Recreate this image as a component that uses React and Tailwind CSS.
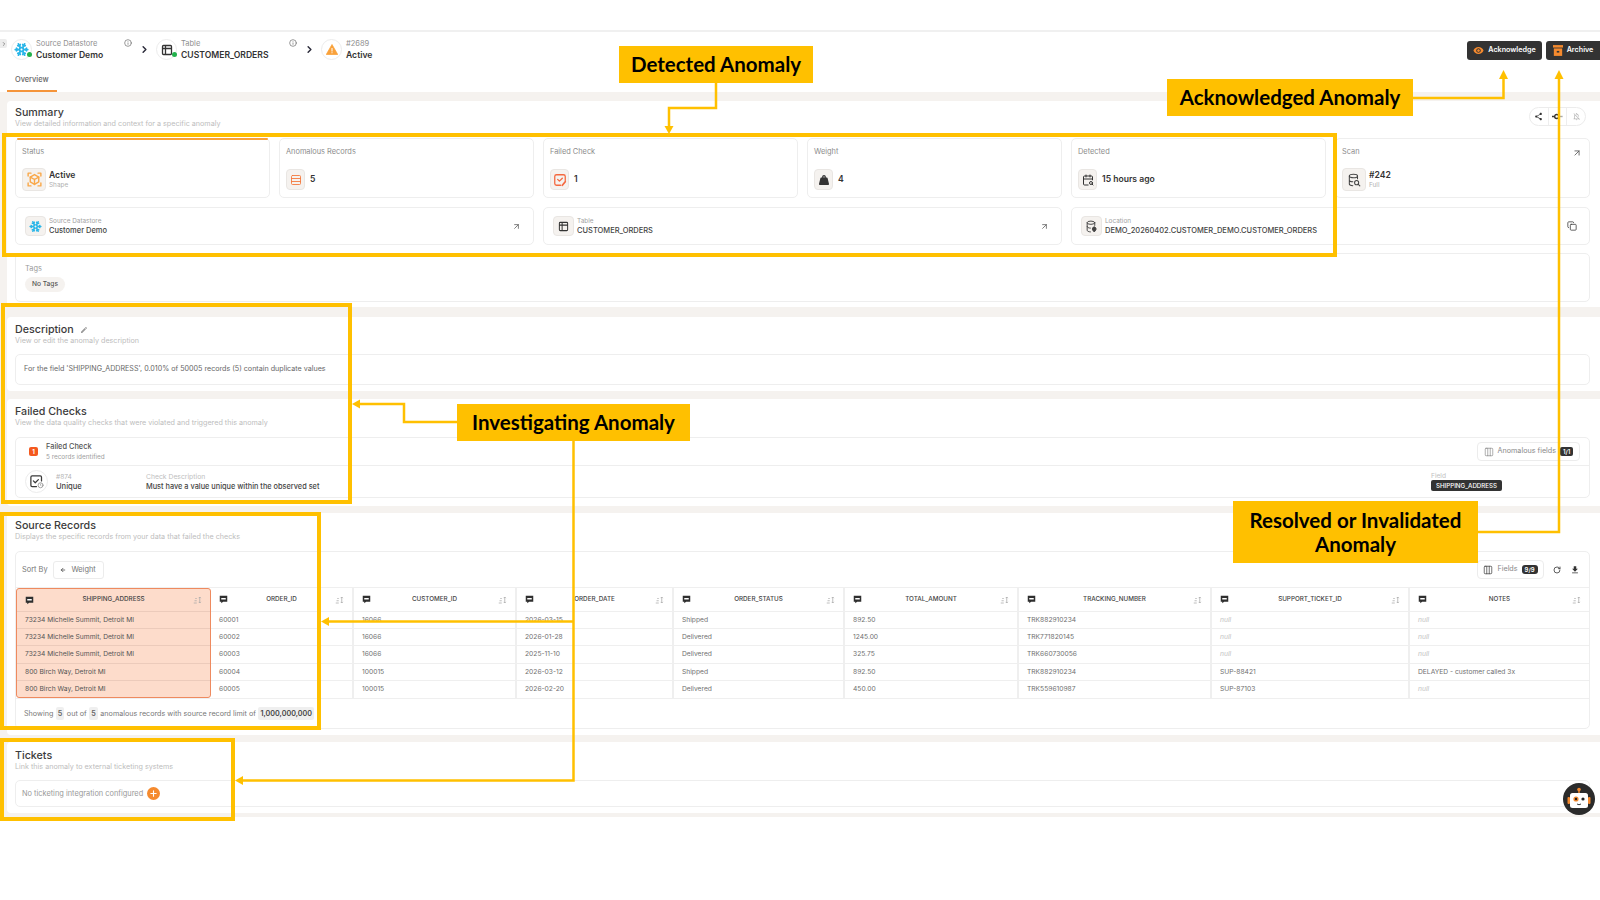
import React from "react";
import { Snowflake, Info, ChevronRight, ArrowUpRight, Rows3, CalendarSearch, Copy, Columns3, RotateCw, Plus, ArrowLeft, Table2 } from "lucide-react";
import { MdVisibility, MdShare, MdEdit, MdDownload, MdOutlineNotificationsOff } from "react-icons/md";
import { FaWeightHanging } from "react-icons/fa";

const Comment = () => (
  <svg width="9" height="9" viewBox="0 0 12 12" className="shrink-0">
    <path d="M1 1h10v8H5.5L3 11V9H1z" fill="#2f2f2f" />
    <path d="M3 4h6v2H3z" fill="#fff" />
  </svg>
);

const Sort = () => (
  <svg width="9" height="8" viewBox="0 0 12 10" className="shrink-0" fill="none" stroke="#a8a8a8" strokeWidth="1">
    <path d="M1 9h4M2 6h3M3 3h2" />
    <path d="M9 1v8M7.5 2.5L9 1l1.5 1.5M7.5 7.5L9 9l1.5-1.5" />
  </svg>
);

const FocusBox = () => (
  <svg width="17" height="17" viewBox="0 0 24 24" fill="none" stroke="#f9a84a" strokeWidth="2" strokeLinecap="round" strokeLinejoin="round">
    <path d="M3 7V3h4M17 3h4v4M21 17v4h-4M7 21H3v-4" />
    <path d="M12 5l6 3.5v7L12 19l-6-3.5v-7z" />
    <path d="M6 8.5l6 3.5 6-3.5M12 12v7" />
  </svg>
);

const NoteCheck = () => (
  <svg width="14" height="14" viewBox="0 0 24 24" fill="none" stroke="#f4683f" strokeWidth="2.2" strokeLinecap="round" strokeLinejoin="round">
    <path d="M13 21H6a3 3 0 0 1-3-3V6a3 3 0 0 1 3-3h12a3 3 0 0 1 3 3v7" />
    <path d="M8 11l3 3 5-5" />
    <path d="M21 15l-5 6" strokeWidth="3" />
  </svg>
);

const CheckClock = () => (
  <svg width="15" height="15" viewBox="0 0 24 24" fill="none" stroke="#3a3a3a" strokeWidth="2" strokeLinecap="round" strokeLinejoin="round">
    <path d="M12 20H5a2 2 0 0 1-2-2V5a2 2 0 0 1 2-2h13a2 2 0 0 1 2 2v6" />
    <path d="M7 11l3 3 5-5" />
    <circle cx="18.5" cy="18" r="4" stroke="#9a9a9a" strokeWidth="1.5" />
    <path d="M18.5 16v2l1 1" stroke="#9a9a9a" strokeWidth="1.2" />
  </svg>
);

const DbSearch = () => (
  <svg width="14" height="14" viewBox="0 0 24 24" fill="none" stroke="#444" strokeWidth="1.8" strokeLinecap="round" strokeLinejoin="round">
    <ellipse cx="11" cy="5" rx="7" ry="3" />
    <path d="M4 5v14c0 1.5 2.5 2.8 6 3M18 5v5M4 12c0 1.5 2.5 3 6 3" />
    <circle cx="16.5" cy="16.5" r="3.5" />
    <path d="M19 19l3 3" />
  </svg>
);

const DbPin = () => (
  <svg width="13" height="13" viewBox="0 0 24 24" fill="none" stroke="#444" strokeWidth="1.8" strokeLinecap="round" strokeLinejoin="round">
    <ellipse cx="11" cy="5" rx="7" ry="3" />
    <path d="M4 5v14c0 1.5 2.5 2.8 6 3M18 5v5M4 12c0 1.5 2.5 3 6 3" />
    <path d="M17 13a3.5 3.5 0 0 1 3.5 3.5c0 2.2-3.5 5.5-3.5 5.500s-3.500-3.300-3.500-5.500A3.500 3.500 0 0 1 17 13z" fill="#444" />
  </svg>
);

const ArchiveIcon = () => (
  <svg width="10" height="11" viewBox="0 0 12 13">
    <path d="M0 0h12v3H0z" fill="#f58a2e" />
    <path d="M1 4h10v9H1z" fill="#f58a2e" />
    <path d="M4.5 7h3v2h-3z" fill="#333" />
  </svg>
);

const KeyDot = () => (
  <svg width="11" height="9" viewBox="0 0 14 10" fill="none" stroke="#333" strokeWidth="1.8">
    <circle cx="6" cy="5" r="2.6" />
    <path d="M9 5h4.5" stroke="#aaa" />
    <path d="M0 5h2.5" />
  </svg>
);

const Warning = () => (
  <svg width="12" height="11" viewBox="0 0 24 22">
    <path d="M12 1L23.5 21H.5z" fill="#f9a13a" stroke="#f9a13a" strokeLinejoin="round" strokeWidth="1.5" />
    <path d="M11 8h2v7h-2zM11 16.5h2v2h-2z" fill="#fff" />
  </svg>
);

const Robot = () => (
  <svg width="32" height="32" viewBox="0 0 32 32">
    <circle cx="16" cy="16" r="16" fill="#2b2b2b" />
    <circle cx="16" cy="6.5" r="1.8" fill="#f58a2e" />
    <path d="M15.3 7h1.4v3h-1.4z" fill="#f58a2e" />
    <rect x="4.5" y="14" width="2.5" height="7" rx="1" fill="#f58a2e" />
    <rect x="25" y="14" width="2.5" height="7" rx="1" fill="#f58a2e" />
    <rect x="7" y="10" width="18" height="15" rx="2.5" fill="#fff" />
    <circle cx="13" cy="16" r="2.6" fill="#f58a2e" />
    <circle cx="13" cy="16" r="1.2" fill="#222" />
    <circle cx="20" cy="16" r="1.6" fill="#222" />
    <path d="M14 21q2 1.5 4 0" stroke="#222" strokeWidth="0.9" fill="none" />
  </svg>
);

const Crumb = ({ icon, label, value, width, info, dot }) => (
  <div className="flex items-center h-[35px] shrink-0" style={{ width }}>
    <div className="relative w-[21px] h-[21px] rounded-full border border-[#ececec] bg-white flex items-center justify-center shrink-0">
      {icon}
      {dot && <span className="absolute right-[-1px] bottom-[2px] w-[5px] h-[5px] rounded-full bg-[#22b14c]" />}
    </div>
    <div className="ml-[4px] flex-1">
      <div className="text-[7.5px] leading-[11px] text-[#8f8f8f] font-normal">{label}</div>
      <div className="text-[8.6px] leading-[13px] text-[#333] font-semibold">{value}</div>
    </div>
    {info && <Info size={8} className="text-[#666] self-start mt-[7px] mr-[1px]" strokeWidth={2} />}
  </div>
);

const Chev = () => (
  <div className="w-[23px] h-[35px] flex items-center justify-center shrink-0">
    <ChevronRight size={11} strokeWidth={3.2} className="text-[#2b2b3a]" />
  </div>
);

const Head = ({ title, sub, pt, edit, right }) => (
  <div className={`flex justify-between items-start ${pt}`}>
    <div>
      <div className="flex items-center text-[10.7px] leading-[13px] text-[#3b3b3b] font-medium">
        {title}
        {edit && <MdEdit size={8} className="ml-[6px] text-[#999]" />}
      </div>
      <div className="text-[7.2px] leading-[10px] text-[#bdbdbd]">{sub}</div>
    </div>
    {right}
  </div>
);

const IconBox = ({ children, w = "w-[19px]", h = "h-[21px]" }) => (
  <div className={`${w} ${h} rounded-[4px] bg-[#f5f2ef] border border-[#e9e6e3] flex items-center justify-center shrink-0`}>{children}</div>
);

const Stat = ({ label, icon, value, sub, top, action, big }) => (
  <div className="relative h-[60px] rounded-[5px] border border-[#eeeeee] bg-white pl-[6px] pt-[8px]">
    {top && <div className="absolute left-[1px] right-[1px] top-[-1px] h-[1.5px] rounded-full bg-[#f9a13a]" />}
    <div className="text-[7.4px] leading-[10px] text-[#8c8c8c]">{label}</div>
    <div className={`flex items-center ${big ? "gap-[3px] mt-[11px]" : "gap-[5px] mt-[12px]"}`}>
      <IconBox w={big ? "w-[24px]" : "w-[19px]"} h={big ? "h-[23px]" : "h-[21px]"}>{icon}</IconBox>
      <div>
        <div className="text-[8.6px] leading-[11px] text-[#333] font-semibold">{value}</div>
        {sub && <div className="text-[6.4px] leading-[9px] text-[#b0b0b0]">{sub}</div>}
      </div>
    </div>
    {action}
  </div>
);

const LinkCard = ({ icon, label, value, action }) => (
  <div className="h-[38px] rounded-[5px] border border-[#eeeeee] bg-white flex items-center pl-[9px] pr-[12px]">
    <IconBox w="w-[21px]" h="h-[20px]">{icon}</IconBox>
    <div className="ml-[3px] flex-1">
      <div className="text-[6.4px] leading-[8px] text-[#a3a3a3]">{label}</div>
      <div className="text-[7.5px] leading-[11px] text-[#444] font-medium">{value}</div>
    </div>
    {action}
  </div>
);

const columns = [
  { name: "SHIPPING_ADDRESS", w: 195, cells: ["73234 Michelle Summit, Detroit MI", "73234 Michelle Summit, Detroit MI", "73234 Michelle Summit, Detroit MI", "800 Birch Way, Detroit MI", "800 Birch Way, Detroit MI"], hot: true },
  { name: "ORDER_ID", w: 141, cells: ["60001", "60002", "60003", "60004", "60005"] },
  { name: "CUSTOMER_ID", w: 163, cells: ["16066", "16066", "16066", "100015", "100015"] },
  { name: "ORDER_DATE", w: 157, cells: ["2026-03-15", "2026-01-28", "2025-11-10", "2026-03-12", "2026-02-20"] },
  { name: "ORDER_STATUS", w: 171, cells: ["Shipped", "Delivered", "Delivered", "Shipped", "Delivered"] },
  { name: "TOTAL_AMOUNT", w: 174, cells: ["892.50", "1245.00", "325.75", "892.50", "450.00"] },
  { name: "TRACKING_NUMBER", w: 193, cells: ["TRK882910234", "TRK771820145", "TRK660730056", "TRK882910234", "TRK559610987"] },
  { name: "SUPPORT_TICKET_ID", w: 198, cells: [null, null, null, "SUP-88421", "SUP-87103"] },
  { name: "NOTES", w: 181, cells: [null, null, null, "DELAYED - customer called 3x", null] },
];

const Column = ({ c, first }) => (
  <div
    className={`shrink-0 ${c.hot ? "bg-[#fddccb] border border-[#ee8a5f] rounded-[3px]" : first ? "" : "border-l-2 border-[#efefef]"}`}
    style={{ width: c.w }}
  >
    <div className={`flex items-center px-[8px] ${c.hot ? "h-[22px]" : "h-[23px]"}`}>
      <Comment />
      <div className="flex-1 text-center text-[6.3px] text-[#444] font-medium">{c.name}</div>
      <Sort />
    </div>
    {c.cells.map((v, i) => (
      <div
        key={i}
        className={`h-[17.2px] flex items-center pl-[8px] text-[6.7px] border-t-[1.5px] ${c.hot ? "border-[#eccbbb] text-[#555]" : "border-[#efefef] text-[#6f6f6f]"} ${v === null ? "italic text-[#c2c2c2]" : ""}`}
      >
        {v === null ? "null" : v}
      </div>
    ))}
  </div>
);

const Pill = ({ children, strong }) => (
  <span className={`mx-[2.5px] px-[2px] h-[13px] inline-flex items-center rounded-[2px] bg-[#efefef] ${strong ? "text-[#444] font-semibold" : "text-[#666] font-semibold"}`}>{children}</span>
);

const Label = ({ className, children }) => (
  <div className={`absolute z-30 bg-[#ffc000] text-black font-bold flex items-center justify-center text-center [font-family:Lato,sans-serif] ${className}`}>{children}</div>
);

const Frame = ({ className }) => <div className={`absolute z-20 border-[4px] border-[#ffc000] ${className}`} />;

export default function App() {
  return (
    <div className="relative w-[1600px] h-[900px] overflow-hidden bg-white [font-family:Inter,sans-serif]">
      <div className="pt-[30px]">
        <div className="border-t-2 border-[#f0f0f0]">
          {/* Header */}
          <div className="relative h-[60px] bg-white">
            <div className="absolute left-0 top-[7px] w-[7px] h-[9px] rounded-r-[2px] bg-[#ececec] flex items-center justify-center">
              <ChevronRight size={6} strokeWidth={3} className="text-[#777]" />
            </div>
            <div className="flex justify-between pl-[11px]">
              <div className="flex">
                <Crumb width={122} icon={<Snowflake size={15} strokeWidth={2.8} className="text-[#29b5e8]" />} label="Source Datastore" value="Customer Demo" info dot />
                <Chev />
                <Crumb width={142} icon={<Table2 size={12} strokeWidth={2.6} className="text-[#333]" />} label="Table" value="CUSTOMER_ORDERS" info dot />
                <Chev />
                <Crumb width={80} icon={<Warning />} label="#2689" value="Active" />
              </div>
              <div className="flex gap-[4px] mt-[9px] items-start">
                <button className="h-[19px] w-[75px] rounded-[3px] bg-[#333] text-white text-[7.2px] font-semibold flex items-center justify-center gap-[4px]">
                  <MdVisibility size={11} className="text-[#f58a2e]" />
                  Acknowledge
                </button>
                <button className="h-[19px] w-[54px] rounded-l-[3px] bg-[#333] text-white text-[7.2px] font-semibold flex items-center justify-center gap-[4px]">
                  <ArchiveIcon />
                  Archive
                </button>
              </div>
            </div>
            <div className="mt-[6px] ml-[7px] w-[50px] h-[19px] pl-[8px] pt-[1px] border-b-2 border-[#f5943a] text-[7.4px] leading-[12px] text-[#666] font-medium">Overview</div>
          </div>

          {/* Content */}
          <div className="bg-[#f5f2ef] pt-[9px] pb-[4px]">
            {/* Summary */}
            <section className="ml-[7px] pl-[8px] pr-[10px] pb-[5px] bg-white rounded-l-[4px]">
              <Head
                title="Summary"
                sub="View detailed information and context for a specific anomaly"
                pt="pt-[5px]"
                right={
                  <div className="mt-[1px] mr-[4px] h-[19px] w-[57px] rounded-full border border-[#ececec] flex items-center">
                    <div className="flex-1 flex justify-center border-r border-[#eee] h-full items-center"><MdShare size={9} className="text-[#333]" /></div>
                    <div className="flex-1 flex justify-center border-r border-[#eee] h-full items-center"><KeyDot /></div>
                    <div className="flex-1 flex justify-center"><MdOutlineNotificationsOff size={9} className="text-[#bbb]" /></div>
                  </div>
                }
              />
              <div className="mt-[9px] grid grid-cols-6 gap-x-[9px]">
                <Stat top big label="Status" value="Active" sub="Shape" icon={<FocusBox />} />
                <Stat label="Anomalous Records" value="5" icon={<Rows3 size={12} strokeWidth={1.8} className="text-[#f4793e]" />} />
                <Stat label="Failed Check" value="1" icon={<NoteCheck />} />
                <Stat label="Weight" value="4" icon={<FaWeightHanging size={10} className="text-[#333]" />} />
                <Stat label="Detected" value="15 hours ago" icon={<CalendarSearch size={12} strokeWidth={2} className="text-[#333]" />} />
                <Stat big label="Scan" value="#242" sub="Full" icon={<DbSearch />} action={<ArrowUpRight size={10} className="absolute right-[7px] top-[9px] text-[#555]" />} />
              </div>
              <div className="mt-[9px] grid grid-cols-3 gap-x-[9px]">
                <LinkCard icon={<Snowflake size={13} strokeWidth={2.6} className="text-[#29b5e8]" />} label="Source Datastore" value="Customer Demo" action={<ArrowUpRight size={9} className="text-[#555]" />} />
                <LinkCard icon={<Table2 size={11} strokeWidth={2.2} className="text-[#333]" />} label="Table" value="CUSTOMER_ORDERS" action={<ArrowUpRight size={9} className="text-[#555]" />} />
                <LinkCard icon={<DbPin />} label="Location" value="DEMO_20260402.CUSTOMER_DEMO.CUSTOMER_ORDERS" action={<Copy size={10} className="text-[#444]" />} />
              </div>
              <div className="mt-[8px] h-[49px] rounded-[5px] border border-[#eeeeee] pl-[9px] pt-[10px]">
                <div className="text-[7.4px] leading-[10px] text-[#9a9a9a]">Tags</div>
                <div className="mt-[3px] w-[40px] h-[15px] rounded-full bg-[#f5f2ef] flex items-center justify-center text-[6.6px] text-[#555] font-medium">No Tags</div>
              </div>
            </section>

            {/* Description */}
            <section className="mt-[10px] ml-[7px] pl-[8px] pr-[10px] pb-[6px] bg-white rounded-l-[4px]">
              <Head title="Description" edit sub="View or edit the anomaly description" pt="pt-[6px]" />
              <div className="mt-[8px] h-[31px] rounded-[5px] border border-[#eeeeee] flex items-center pl-[8px] text-[7.15px] text-[#666]">
                For the field 'SHIPPING_ADDRESS', 0.010% of 50005 records (5) contain duplicate values
              </div>
            </section>

            {/* Failed Checks */}
            <section className="mt-[8px] ml-[7px] pl-[8px] pr-[10px] pb-[8px] bg-white rounded-l-[4px]">
              <Head title="Failed Checks" sub="View the data quality checks that were violated and triggered this anomaly" pt="pt-[6px]" />
              <div className="mt-[9px] rounded-[5px] border border-[#eeeeee]">
                <div className="h-[28px] flex items-center justify-between pl-[13px] pr-[9px] border-b border-[#eeeeee]">
                  <div className="flex items-center">
                    <div className="w-[9px] h-[9px] rounded-[2px] bg-[#f4591f] text-white text-[6px] font-bold flex items-center justify-center">1</div>
                    <div className="ml-[8px]">
                      <div className="text-[7.4px] leading-[11px] text-[#555] font-medium">Failed Check</div>
                      <div className="text-[6.4px] leading-[11px] text-[#a0a0a0]">5 records identified</div>
                    </div>
                  </div>
                  <div className="h-[19px] w-[103px] rounded-[4px] border border-[#ececec] flex items-center justify-center gap-[4px] text-[7.2px] text-[#888]">
                    <Columns3 size={10} strokeWidth={1.4} className="text-[#777]" />
                    Anomalous fields
                    <span className="px-[3px] h-[9px] rounded-[2px] bg-[#333] text-white text-[6px] font-semibold flex items-center">1/1</span>
                  </div>
                </div>
                <div className="h-[31px] flex items-center pl-[9px]">
                  <div className="w-[23px] h-[23px] rounded-full border border-[#ececec] flex items-center justify-center shrink-0"><CheckClock /></div>
                  <div className="ml-[8px] w-[90px] shrink-0">
                    <div className="text-[6.6px] leading-[10px] text-[#b5b5b5]">#874</div>
                    <div className="text-[7.6px] leading-[10px] text-[#444] font-medium">Unique</div>
                  </div>
                  <div className="w-[1285px] shrink-0">
                    <div className="text-[6.8px] leading-[10px] text-[#c0c0c0]">Check Description</div>
                    <div className="text-[7.35px] leading-[10px] text-[#444] font-medium">Must have a value unique within the observed set</div>
                  </div>
                  <div>
                    <div className="text-[6.6px] leading-[8px] text-[#c0c0c0]">Field</div>
                    <div className="h-[11px] w-[71px] rounded-[2px] bg-[#333] text-white text-[6.2px] font-medium flex items-center justify-center">SHIPPING_ADDRESS</div>
                  </div>
                </div>
              </div>
            </section>

            {/* Source Records */}
            <section className="mt-[7px] ml-[7px] pl-[8px] pr-[10px] pb-[6px] bg-white rounded-l-[4px]">
              <Head title="Source Records" sub="Displays the specific records from your data that failed the checks" pt="pt-[6px]" />
              <div className="mt-[9px] rounded-[5px] border border-[#eeeeee]">
                <div className="h-[35px] flex items-center justify-between pl-[6px] pr-[9px]">
                  <div className="flex items-center">
                    <span className="text-[7.4px] text-[#777]">Sort By</span>
                    <div className="ml-[5px] h-[18px] w-[51px] rounded-[3px] border border-[#ececec] flex items-center justify-center gap-[5px] text-[7.4px] text-[#777]">
                      <ArrowLeft size={6} strokeWidth={3} className="text-[#444]" />
                      Weight
                    </div>
                  </div>
                  <div className="flex items-center">
                    <div className="h-[19px] w-[67px] rounded-[4px] border border-[#ececec] flex items-center justify-center gap-[4px] text-[7.2px] text-[#888]">
                      <Columns3 size={10} strokeWidth={1.8} className="text-[#444]" />
                      Fields
                      <span className="px-[3px] h-[9px] rounded-[3px] bg-[#333] text-white text-[6px] font-semibold flex items-center">9/9</span>
                    </div>
                    <RotateCw size={8} strokeWidth={2.6} className="ml-[9px] text-[#444]" />
                    <MdDownload size={10} className="ml-[9px] text-[#333]" />
                  </div>
                </div>
                <div className="flex border-y-[1.5px] border-[#efefef]">
                  {columns.map((c, i) => (
                    <Column key={c.name} c={c} first={i === 0 || i === 1} />
                  ))}
                </div>
                <div className="h-[29px] pt-[1px] flex items-center pl-[8px] text-[7.2px] text-[#777]">
                  Showing <Pill>5</Pill> out of <Pill>5</Pill> anomalous records with source record limit of <Pill strong>1,000,000,000</Pill>
                </div>
              </div>
            </section>

            {/* Tickets */}
            <section className="mt-[7px] ml-[7px] pl-[8px] pr-[10px] pb-[6px] bg-white rounded-l-[4px]">
              <Head title="Tickets" sub="Link this anomaly to external ticketing systems" pt="pt-[7px]" />
              <div className="mt-[8px] h-[27px] rounded-[5px] border border-[#eeeeee] flex items-center pl-[6px] text-[7.4px] text-[#999]">
                No ticketing integration configured
                <span className="ml-[4px] w-[13px] h-[13px] rounded-full bg-[#f58a2e] flex items-center justify-center">
                  <Plus size={9} strokeWidth={3} className="text-white" />
                </span>
              </div>
            </section>
          </div>
        </div>
      </div>

      {/* Chat bot */}
      <div className="absolute left-[1563px] top-[783px] z-10"><Robot /></div>

      {/* Annotations */}
      <Frame className="left-[2px] top-[133px] w-[1335px] h-[124px]" />
      <Frame className="left-[1px] top-[303px] w-[351px] h-[201px]" />
      <Frame className="left-0 top-[512px] w-[321px] h-[218px]" />
      <Frame className="left-0 top-[738px] w-[235px] h-[83px]" />

      <svg className="absolute left-0 top-0 z-20" width="1600" height="900" fill="none" stroke="#ffc000" strokeWidth="2.5">
        <path d="M716 83V108H669V127" />
        <path d="M669 134l-4.5-8h9z" fill="#ffc000" stroke="none" />
        <path d="M1413 98H1503.5V77" />
        <path d="M1503.5 70l-4.5 9h9z" fill="#ffc000" stroke="none" />
        <path d="M1478 532H1559V77" />
        <path d="M1559 70l-4.5 9h9z" fill="#ffc000" stroke="none" />
        <path d="M457 422H404V404H359" />
        <path d="M352 404l8-4.5v9z" fill="#ffc000" stroke="none" />
        <path d="M573.5 441V780.5H242" />
        <path d="M235 780.5l8-4.5v9z" fill="#ffc000" stroke="none" />
        <path d="M573.5 621.5H328" />
        <path d="M321 621.5l8-4.5v9z" fill="#ffc000" stroke="none" />
      </svg>

      <Label className="left-[619px] top-[46px] w-[194px] h-[37px] text-[20.5px]">Detected Anomaly</Label>
      <Label className="left-[1167px] top-[79px] w-[246px] h-[37px] text-[20.5px]">Acknowledged Anomaly</Label>
      <Label className="left-[457px] top-[404px] w-[233px] h-[37px] text-[20.5px]">Investigating Anomaly</Label>
      <Label className="left-[1233px] top-[501px] w-[245px] h-[62px] text-[20.5px] leading-[24px]">Resolved or Invalidated<br />Anomaly</Label>
    </div>
  );
}
